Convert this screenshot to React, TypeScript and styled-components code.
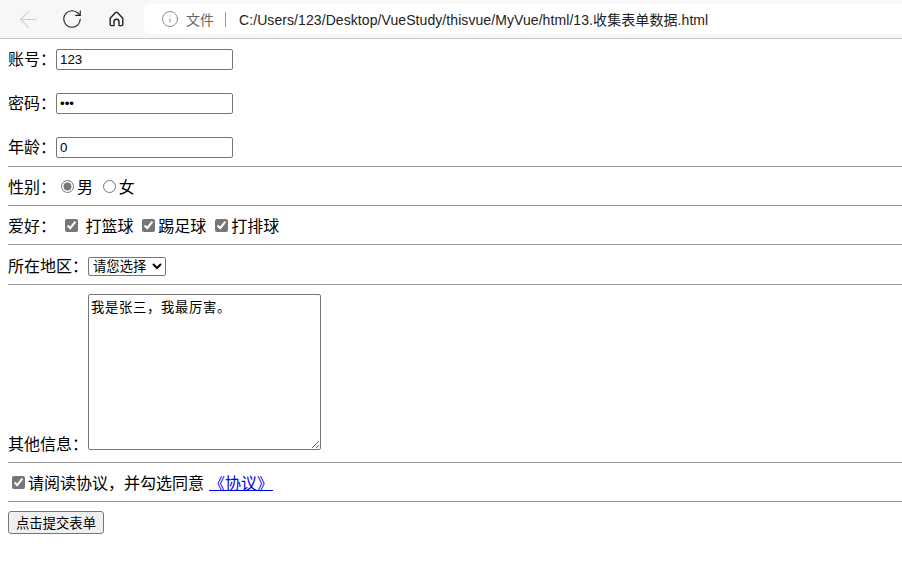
import React from "react";
import styled, { createGlobalStyle } from "styled-components";
import { ArrowLeft, RotateCw, Info } from "lucide-react";

const GlobalStyle = createGlobalStyle`
  html, body {
    margin: 0;
    padding: 0;
    background: #fff;
    font-family: "Liberation Sans", "Noto Sans CJK SC", sans-serif;
    color: #000;
  }
`;

const Toolbar = styled.div`
  display: flex;
  align-items: flex-start;
  height: 38px;
  padding-left: 6px;
  background: #f7f7f7;
  border-bottom: 1px solid #c4c4c4;
`;

const NavButton = styled.div<{ $muted?: boolean }>`
  display: flex;
  align-items: center;
  justify-content: center;
  width: 44px;
  height: 38px;
  color: ${(p) => (p.$muted ? "#d0d0d0" : "#222")};
`;

const AddressBar = styled.div`
  display: flex;
  align-items: center;
  flex: 1;
  height: 30px;
  margin: 4px 0 0 6px;
  padding-left: 17px;
  background: #fff;
  border-radius: 5px 0 0 5px;
  font-size: 14px;
`;

const Scheme = styled.span`
  margin-left: 7px;
  color: #666;
`;

const Divider = styled.span`
  width: 1px;
  height: 15px;
  margin: 0 13px 0 11px;
  background: #999;
`;

const Url = styled.span`
  color: #222;
  letter-spacing: 0.08px;
`;

const Form = styled.form`
  padding-left: 8px;
  font-size: 16px;
`;

const Fields = styled.div`
  display: flex;
  flex-direction: column;
  gap: 23px;
  padding: 10px 0 8px;
`;

const Field = styled.div`
  display: flex;
  align-items: center;
  height: 21px;
`;

const Label = styled.label`
  white-space: pre;
`;

const FieldLabel = styled(Label)`
  margin-bottom: 4px;
`;

const TextInput = styled.input`
  width: 177px;
  height: 21px;
  box-sizing: border-box;
  margin: 0;
  padding: 1px 3px;
  font: 13.33px "Liberation Sans", "Noto Sans CJK SC", sans-serif;
  border: 1px solid #767676;
  border-radius: 2px;
`;

const Rule = styled.hr`
  height: 1px;
  margin: 0;
  border: 0;
  background: #9a9a9a;
`;

const Row = styled.div<{ $height: number }>`
  display: flex;
  align-items: center;
  height: ${(p) => p.$height}px;
`;

const Radio = styled.input.attrs({ type: "radio" })`
  width: 13px;
  height: 13px;
  margin: 0 3px 0 5.1px;
  accent-color: #767676;
`;

const Check = styled.input.attrs({ type: "checkbox" })<{ $left?: number }>`
  width: 13px;
  height: 13px;
  margin: 0 3px 0 ${(p) => p.$left ?? 4.5}px;
  accent-color: #767676;
`;

const Select = styled.select`
  width: 78px;
  height: 19px;
  margin: 4px 0 0;
  padding: 0;
  font: 13.33px "Liberation Sans", "Noto Sans CJK SC", sans-serif;
  background: #fff;
  border: 1px solid #767676;
  border-radius: 2px;
`;

const InfoRow = styled.div`
  display: flex;
  align-items: flex-end;
  height: 177px;
`;

const TextArea = styled.textarea`
  display: block;
  box-sizing: border-box;
  width: 233px;
  height: 156px;
  margin: 0 0 12px;
  padding: 2px;
  font: 13.33px "Liberation Mono", "Noto Sans CJK SC", monospace;
  letter-spacing: 0.67px;
  border: 1px solid #767676;
  border-radius: 2px;
`;

const InfoLabel = styled.label`
  margin-bottom: 7px;
`;

const Submit = styled.button`
  display: block;
  width: 96px;
  height: 23px;
  margin-top: 9px;
  padding: 0;
  font: 13.33px "Liberation Sans", "Noto Sans CJK SC", sans-serif;
  background: #efefef;
  border: 1px solid #767676;
  border-radius: 3px;
`;

const AgreeLink = styled.a`
  margin-left: 0.6px;
  color: #0000ee;
  text-decoration: underline;
`;

// browser home button, door is an arch so the lucide one doesn't fit
function HomeIcon() {
  return (
    <svg width="15" height="16" viewBox="0 0 15 16" fill="none" stroke="currentColor" strokeWidth="1.4" strokeLinejoin="round">
      <path d="M1.2 7.2 L6.6 1.6 a1.2 1.2 0 0 1 1.8 0 L13.8 7.2 V13.6 a1 1 0 0 1 -1 1 H10 V10.8 a2.5 2.5 0 0 0 -5 0 V14.6 H2.2 a1 1 0 0 1 -1 -1 Z" />
    </svg>
  );
}

export default function App() {
  return (
    <>
      <GlobalStyle />
      <Toolbar>
        <NavButton $muted>
          <ArrowLeft size={27} strokeWidth={1} />
        </NavButton>
        <NavButton>
          <RotateCw size={22} strokeWidth={1.2} />
        </NavButton>
        <NavButton>
          <HomeIcon />
        </NavButton>
        <AddressBar>
          <Info size={18} strokeWidth={1.1} color="#777" />
          <Scheme>文件</Scheme>
          <Divider />
          <Url>C:/Users/123/Desktop/VueStudy/thisvue/MyVue/html/13.收集表单数据.html</Url>
        </AddressBar>
      </Toolbar>
      <Form onSubmit={(e) => e.preventDefault()}>
        <Fields>
          <Field>
            <FieldLabel>账号：</FieldLabel>
            <TextInput type="text" defaultValue="123" />
          </Field>
          <Field>
            <FieldLabel>密码：</FieldLabel>
            <TextInput type="password" defaultValue="123" />
          </Field>
          <Field>
            <FieldLabel>年龄：</FieldLabel>
            <TextInput type="number" defaultValue="0" />
          </Field>
        </Fields>
        <Rule />
        <Row $height={38}>
          <Label>性别：</Label>
          <Radio name="sex" defaultChecked />男&nbsp;
          <Radio name="sex" />女
        </Row>
        <Rule />
        <Row $height={38}>
          <Label>爱好： </Label>
          <Check defaultChecked />&nbsp;打篮球&nbsp;
          <Check defaultChecked />踢足球&nbsp;
          <Check defaultChecked />打排球
        </Row>
        <Rule />
        <Row $height={39}>
          <Label>所在地区：</Label>
          <Select defaultValue="">
            <option value="">请您选择</option>
            <option value="bj">北京</option>
          </Select>
        </Row>
        <Rule />
        <InfoRow>
          <InfoLabel>其他信息：</InfoLabel>
          <TextArea defaultValue="我是张三，我最厉害。" />
        </InfoRow>
        <Rule />
        <Row $height={38}>
          <Check $left={4} defaultChecked />
          请阅读协议，并勾选同意&nbsp;
          <AgreeLink href="#">《协议》</AgreeLink>
        </Row>
        <Rule />
        <Submit type="submit">点击提交表单</Submit>
      </Form>
    </>
  );
}
